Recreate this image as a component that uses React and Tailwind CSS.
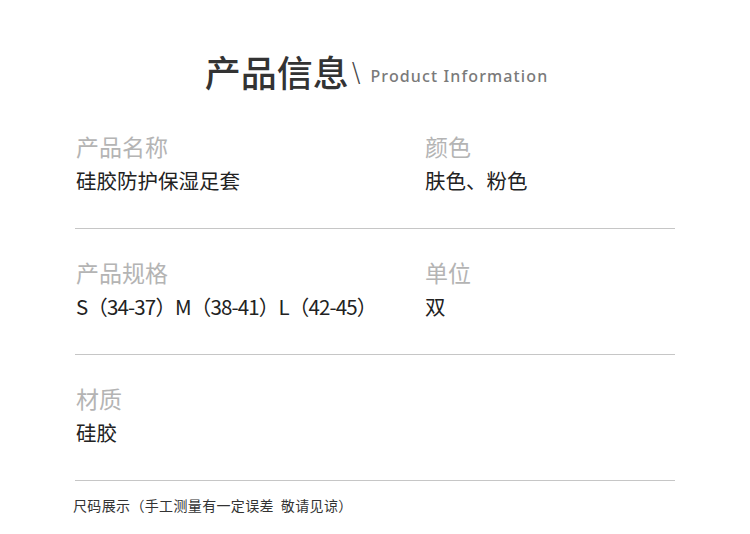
import React from 'react';

const rows = [
  [
    { label: '产品名称', value: '硅胶防护保湿足套' },
    { label: '颜色', value: '肤色、粉色' },
  ],
  [
    { label: '产品规格', value: 'S（34-37）M（38-41）L（42-45）', tight: true },
    { label: '单位', value: '双' },
  ],
  [{ label: '材质', value: '硅胶' }],
];

function InfoCell({ label, value, tight }) {
  return (
    <div>
      <div className="h-[23px] text-[23px] leading-[23px] text-[#b4b4b4]">{label}</div>
      <div
        className={
          tight
            ? 'mt-[12px] h-[21px] text-[20.5px] leading-[21px] text-[#222] whitespace-nowrap tracking-[-0.85px]'
            : 'mt-[12px] h-[21px] text-[20.5px] leading-[21px] text-[#222] whitespace-nowrap'
        }
      >
        {value}
      </div>
    </div>
  );
}

export default function App() {
  return (
    <div
      className="w-[750px] h-[534px] bg-white overflow-hidden"
      style={{ fontFamily: '"Noto Sans CJK SC", "Noto Sans", sans-serif' }}
    >
      <div className="pt-[53px] flex justify-center items-end pl-[3px]">
        <span className="text-[36px] leading-[36px] h-[36px] font-medium text-[#333]">产品信息</span>
        <span
          className="ml-[3px] text-[26px] leading-[26px] font-light text-[#444] mb-[3px]"
          style={{ fontFamily: '"DejaVu Sans", sans-serif' }}
        >
          \
        </span>
        <span
          className="ml-[10px] mb-[3px] text-[16px] leading-[20px] font-medium tracking-[0.07em] text-[#7a7a7a]"
          style={{ fontFamily: '"Noto Sans", sans-serif' }}
        >
          Product Information
        </span>
      </div>

      <div className="mx-[75px] mt-[46px]">
        {rows.map((row, i) => (
          <div key={i} className={i === 0 ? '' : 'pt-[32px]'}>
            <div className="grid grid-cols-[349px_1fr] pl-[1px]">
              {row.map((cell) => (
                <InfoCell key={cell.label} label={cell.label} value={cell.value} tight={cell.tight} />
              ))}
            </div>
            <div className="mt-[37px] h-px bg-[#c6c6c6]" />
          </div>
        ))}
        <div className="mt-[16px] text-[14px] leading-[16px] text-[#333] -ml-[2px] whitespace-pre tracking-[0.35px]">
          尺码展示（手工测量有一定误差  敬请见谅）
        </div>
      </div>
    </div>
  );
}
